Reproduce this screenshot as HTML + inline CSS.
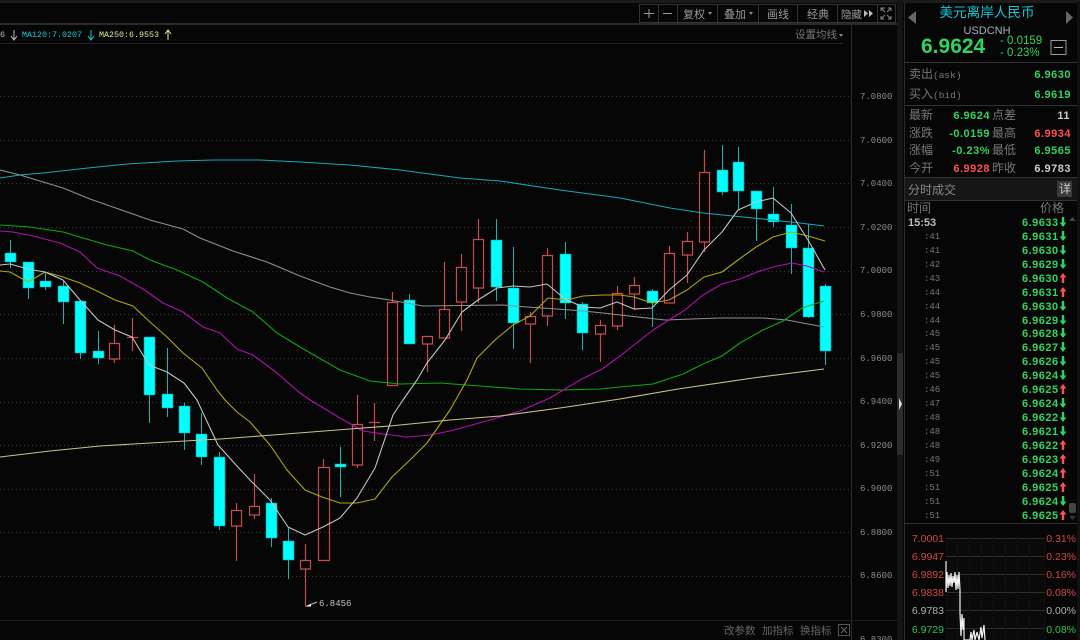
<!DOCTYPE html>
<html><head><meta charset="utf-8"><style>
html,body{margin:0;padding:0;background:#060606;width:1080px;height:640px;overflow:hidden}
svg{display:block}
.m{font-family:"Liberation Mono",monospace}
.c{font-family:"WenQuanYi Zen Hei","Noto Sans CJK SC",sans-serif}
.s{font-family:"Liberation Sans",sans-serif}
.b{font-family:"Liberation Sans",sans-serif;font-weight:bold;font-size:11px;letter-spacing:.5px}
</style></head><body>
<svg width="1080" height="640" viewBox="0 0 1080 640" xmlns="http://www.w3.org/2000/svg">
<defs>
<path id="d" d="M-1.2 -5H1.2V0.5H3.4L0 5L-3.4 0.5H-1.2Z" fill="#2fd35f"/>
<path id="u" d="M-1.2 5H1.2V-0.5H3.4L0 -5L-3.4 -0.5H-1.2Z" fill="#ff5050"/>
</defs>
<rect width="1080" height="640" fill="#060606"/>
<!-- frame -->
<rect x="0" y="0" width="1080" height="3" fill="#1b1b1b"/>
<rect x="0" y="23" width="897" height="2" fill="#2a2a2a"/>
<rect x="0" y="43" width="843" height="1" fill="#222"/>
<rect x="851" y="25" width="1" height="615" fill="#2a2a2a"/>
<rect x="0" y="620" width="897" height="1" fill="#1e1e1e"/>
<rect x="897" y="0" width="6" height="640" fill="#141414"/>
<rect x="897" y="353" width="6" height="102" fill="#2c2c2c"/>
<path d="M899 398L902 404L899 410Z" fill="#ddd"/>
<!-- toolbar -->
<g fill="none" stroke="#333"><rect x="639.5" y="4.5" width="256" height="18"/>
<path d="M658.5 4V22M677.5 4V22M717.5 4V22M758.5 4V22M797.5 4V22M837.5 4V22M877.5 4V22"/></g>
<path d="M644 13.5H654M649 9V18" stroke="#999" fill="none"/>
<path d="M663 13.5H672" stroke="#999" fill="none"/>
<g class="c" font-size="11" fill="#999">
<text x="683" y="18">复权</text><text x="724" y="18">叠加</text><text x="767" y="18">画线</text><text x="807" y="18">经典</text><text x="841" y="18" font-size="10.5">隐藏</text>
<text x="795" y="38" font-size="10.5" fill="#777">设置均线</text>
<text x="724" y="634" font-size="10.5" fill="#666">改参数</text><text x="762" y="634" font-size="10.5" fill="#666">加指标</text><text x="800" y="634" font-size="10.5" fill="#666">换指标</text>
</g>
<path d="M708 12H712L710 15ZM749 12H753L751 15ZM839 34H843L841 37Z" fill="#888"/>
<path d="M864 10L868 13.5L864 17ZM869 10L873 13.5L869 17Z" fill="#bbb"/>
<path d="M881 11V8H885M891 8H888M891 8V11M881 16V19H884M891 19V16M891 19H888M881 8L885 12M891 8L887 12M881 19L885 15M891 19L887 15" stroke="#888" fill="none"/>
<rect x="838.5" y="624.5" width="11" height="11" fill="none" stroke="#555"/>
<path d="M841 627L847 633M847 627L841 633" stroke="#666" fill="none"/>
<!-- MA text -->
<g class="m" font-size="8.5">
<text x="0" y="37" fill="#bbb">6</text>
<text x="22" y="37" fill="#19c8d8" textLength="60" lengthAdjust="spacingAndGlyphs">MA120:7.0207</text>
<text x="99" y="37" fill="#e6e69a" textLength="60" lengthAdjust="spacingAndGlyphs">MA250:6.9553</text>
</g>
<path d="M14 30V39M11 36L14 40L17 36" stroke="#bbb" fill="none"/>
<path d="M91 30V39M88 36L91 40L94 36" stroke="#19c8d8" fill="none"/>
<path d="M168 40V31M165 34L168 30L171 34" stroke="#e6e69a" fill="none"/>
<!-- grid -->
<path d="M0 96.5H851M0 140.5H851M0 183.5H851M0 227.5H851M0 271.5H851M0 314.5H851M0 358.5H851M0 402.5H851M0 445.5H851M0 489.5H851M0 532.5H851M0 576.5H851" stroke="#3a3a3a" stroke-dasharray="1 3" fill="none"/>
<g class="m" font-size="9" fill="#8a8a8a">
<text x="860" y="99">7.0800</text><text x="860" y="143">7.0600</text><text x="860" y="186">7.0400</text><text x="860" y="230">7.0200</text><text x="860" y="273">7.0000</text><text x="860" y="317">6.9800</text><text x="860" y="361">6.9600</text><text x="860" y="404">6.9400</text><text x="860" y="448">6.9200</text><text x="860" y="491">6.9000</text><text x="860" y="535">6.8800</text><text x="860" y="578">6.8600</text><text x="860" y="642">6.8300</text>
</g>
<!-- cyan wicks -->
<path fill="none" stroke="#12b4b4" d="M10.5 240V268M28.5 262V299M45.5 273V290M63.5 281V324M80.5 301V359M98.5 331V364M149.5 337V423M167.5 348V417M184.5 403V450M201.5 413V465M219.5 452V530M271.5 498V547M288.5 527V579M340.5 447V497M409.5 294V344M496.5 219V301M513.5 247V349M565.5 242V319M582.5 302V350M652.5 289V327M722.5 145V195M738.5 147V210M756.5 191V241M773.5 187V227M791.5 204V274M808.5 224V318M825.5 284V365"/>
<!-- cyan bodies -->
<path fill="#00ffff" stroke="#0c9a9a" stroke-width=".6" d="M5 253h11v9h-11zM23 262h11v26h-11zM40 281h11v6h-11zM58 286h11v16h-11zM75 301h11v52h-11zM93 351h11v7h-11zM144 337h11v58h-11zM162 394h11v14h-11zM179 406h11v27h-11zM196 434h11v23h-11zM214 457h11v69h-11zM266 503h11v35h-11zM283 541h11v19h-11zM335 464h11v3h-11zM404 300h11v44h-11zM491 240h11v47h-11zM508 288h11v35h-11zM560 254h11v49h-11zM577 304h11v29h-11zM647 291h11v12h-11zM717 170h11v22h-11zM733 162h11v29h-11zM751 191h11v18h-11zM768 214h11v8h-11zM786 225h11v23h-11zM803 248h11v69h-11zM820 286h11v65h-11z"/>
<!-- red -->
<path fill="none" stroke="#c94c4c" stroke-width="1.2" d="M114.5 325V343M114.5 359V363M109.5 343.5h10v15.5h-10zM132.5 318V351M127 337.5h11M236.5 503V510M236.5 526V561M231.5 510.5h10v15.5h-10zM254.5 474V506M254.5 515V519M249.5 506.5h10v8.5h-10zM305.5 544V560M305.5 569V606M300.5 560.5h10v8.5h-10zM323.5 459V467M318.5 467.5h11v93h-11zM357.5 395V424M357.5 465V468M352.5 424.5h10v40.5h-10zM374.5 403V441M369 422.5h11M392.5 292V302M387.5 302.5h10v83h-10zM427.5 344V372M422.5 336.5h10v7.5h-10zM444.5 262V309M439.5 309.5h10v28.5h-10zM461.5 254V267M461.5 302V331M456.5 267.5h10v34.5h-10zM478.5 219V239M478.5 288V303M473.5 239.5h10v48.5h-10zM530.5 312V316M530.5 324V363M525.5 316.5h10v7.5h-10zM547.5 248V255M547.5 316V326M542.5 255.5h10v60.5h-10zM600.5 320V325M600.5 334V362M595.5 325.5h10v8.5h-10zM617.5 286V293M617.5 326V330M612.5 293.5h10v32.5h-10zM634.5 277V285M634.5 294V310M629.5 285.5h10v8.5h-10zM669.5 246V253M664.5 253.5h10v49.5h-10zM687.5 232V241M687.5 255V283M682.5 241.5h10v13.5h-10zM704.5 150V172M704.5 242V252M699.5 172.5h10v69.5h-10z"/>
<!-- MA lines -->
<g fill="none" stroke-width="1.1" stroke-linejoin="round">
<polyline stroke="#14a9b8" points="0,178 20,175 43,173 88,168 127,164 177,161 213,160 260,160 300,162 350,165 400,170 460,178 500,181 560,190 620,198 670,208 703,213 753,218 800,223 824,226"/>
<polyline stroke="#8f8f8f" points="0,170 20,175 63,188 90,199 150,220 183,229 200,238 233,251 267,262 300,276 330,287 350,293 370,297 390,300 423,306 503,305 527,307 557,309 583,311 603,313 620,315 665,320 720,318 763,318 787,320 824,327"/>
<polyline stroke="#0ca80c" points="0,225 30,227 63,232 90,240 107,245 133,251 150,260 177,270 203,282 227,298 253,312 277,333 300,347 340,370 370,381 400,384 440,383 480,386 520,389 560,390 600,389 620,387 653,384 683,374 703,364 722,356 740,343 763,330 783,321 802,308 824,301"/>
<polyline stroke="#b010b0" points="0,231 13,232 33,236 60,243 80,252 97,268 120,276 143,289 163,303 183,312 203,327 220,333 237,349 253,355 277,373 300,393 310,400 340,418 363,431 383,434 407,437 430,435 450,431 490,420 520,411 550,398 580,380 602,369 620,356 653,330 685,310 703,295 722,284 740,279 757,272 773,267 792,263 807,266 824,272"/>
<polyline stroke="#b0a80a" points="0,271 10,272 28,282 45,272 63,277 80,283 97,291 115,300 133,306 150,322 167,337 183,353 202,368 217,390 225,400 237,412 250,422 270,445 287,470 305,490 322,497 340,503 357,503 375,499 392,477 410,460 427,443 450,410 467,380 477,358 495,340 513,325 530,316 548,298 567,300 583,296 603,295 620,295 634,297 652,303 669,300 687,290 704,277 722,272 738,260 756,247 773,237 791,232 808,236 825,241"/>
<polyline stroke="#c9c58a" points="0,457 50,451 100,446 150,443 220,439 260,436 350,429 390,426 450,420 500,416 560,408 620,399 678,389 753,378 824,369"/>
<polyline stroke="#c4c4c4" points="0,265 10,264 28,269 45,272 63,280 80,300 98,320 115,330 132,337 149,365 167,372 184,383 197,400 218,445 236,465 250,480 270,500 288,527 305,535 323,527 340,518 357,498 375,468 393,415 403,400 417,380 427,363 445,340 462,312 478,300 497,288 513,286 530,287 547,284 565,299 583,307 600,308 617,302 634,309 652,308 669,290 687,275 704,250 722,232 738,210 756,202 773,198 791,213 808,240 825,270"/>
</g>
<path d="M307 606L317 602" stroke="#bbb" fill="none"/><path d="M305 606.5L311 604L311 606.5Z" fill="#fff"/>
<text class="m" font-size="9" fill="#c4c4c4" x="319" y="606">6.8456</text>
<!-- right panel -->
<rect x="904" y="2" width="1" height="638" fill="#2a2a2a"/>
<rect x="1077" y="2" width="3" height="638" fill="#111"/>
<path d="M916 11V24L908 17.5Z" fill="#666"/>
<path d="M1066 11V24L1073 17.5Z" fill="#666"/>
<text class="c" font-size="13.6" fill="#12c6d6" x="987" y="17" text-anchor="middle">美元离岸人民币</text>
<text class="s" font-size="11" fill="#a8b0b8" x="987" y="34" text-anchor="middle">USDCNH</text>
<text class="s" font-size="21" font-weight="bold" fill="#2fd35f" x="921" y="53">6.9624</text>
<g class="s" font-size="11.5" fill="#2fd35f"><text x="1000" y="44">- 0.0159</text><text x="1000" y="56">- 0.23%</text></g>
<rect x="1051" y="40.5" width="15" height="14" fill="none" stroke="#999"/><path d="M1054 47.5H1063" stroke="#bbb"/>
<rect x="905" y="62" width="172" height="1" fill="#333"/>
<rect x="905" y="105" width="172" height="1" fill="#333"/>
<g class="c" font-size="12" fill="#777">
<text x="909" y="78">卖出<tspan class="m" font-size="9.5">(ask)</tspan></text><text x="909" y="98">买入<tspan class="m" font-size="9.5">(bid)</tspan></text>
<text x="909" y="119">最新</text><text x="909" y="137">涨跌</text><text x="909" y="154">涨幅</text><text x="909" y="172">今开</text>
<text x="992" y="119">点差</text><text x="992" y="137">最高</text><text x="992" y="154">最低</text><text x="992" y="172">昨收</text>
</g>
<g class="b" text-anchor="end" fill="#2fd35f">
<text x="1071" y="78">6.9630</text><text x="1071" y="98">6.9619</text>
<text x="990" y="119">6.9624</text><text x="990" y="137">-0.0159</text><text x="990" y="154">-0.23%</text><text x="990" y="172" fill="#ff5050">6.9928</text>
<text x="1070" y="119" fill="#ccc">11</text><text x="1071" y="137" fill="#ff5050">6.9934</text><text x="1071" y="154">6.9565</text><text x="1071" y="172" fill="#ccc">6.9783</text>
</g>
<rect x="905" y="178" width="172" height="22" fill="#161616"/>
<rect x="905" y="177" width="172" height="1" fill="#333"/>
<rect x="905" y="200" width="172" height="1" fill="#333"/>
<text class="c" font-size="12" fill="#888" x="908" y="194">分时成交</text>
<rect x="1057" y="181" width="15" height="16" fill="#3a3a3a"/>
<text class="c" font-size="12" fill="#ccc" x="1059" y="193">详</text>
<g class="c" font-size="12" fill="#777"><text x="907" y="212">时间</text><text x="1040" y="212">价格</text></g>
<text class="s" font-size="11" font-weight="bold" fill="#bbb" x="908" y="226">15:53</text>
<g class="m" font-size="9" fill="#777">
<text x="924" y="239">:41</text><text x="924" y="253">:41</text><text x="924" y="267">:42</text><text x="924" y="281">:43</text><text x="924" y="295">:44</text><text x="924" y="309">:44</text><text x="924" y="323">:44</text><text x="924" y="336">:45</text><text x="924" y="350">:45</text><text x="924" y="364">:45</text><text x="924" y="378">:45</text><text x="924" y="392">:46</text><text x="924" y="406">:47</text><text x="924" y="420">:48</text><text x="924" y="434">:48</text><text x="924" y="448">:48</text><text x="924" y="462">:49</text><text x="924" y="476">:51</text><text x="924" y="490">:51</text><text x="924" y="504">:51</text><text x="924" y="518">:51</text>
</g>
<g class="b" fill="#2fd35f">
<text x="1022" y="226">6.9633</text><text x="1022" y="240">6.9631</text><text x="1022" y="254">6.9630</text><text x="1022" y="268">6.9629</text><text x="1022" y="282">6.9630</text><text x="1022" y="296">6.9631</text><text x="1022" y="310">6.9630</text><text x="1022" y="324">6.9629</text><text x="1022" y="337">6.9628</text><text x="1022" y="351">6.9627</text><text x="1022" y="365">6.9626</text><text x="1022" y="379">6.9624</text><text x="1022" y="393">6.9625</text><text x="1022" y="407">6.9624</text><text x="1022" y="421">6.9622</text><text x="1022" y="435">6.9621</text><text x="1022" y="449">6.9622</text><text x="1022" y="463">6.9623</text><text x="1022" y="477">6.9624</text><text x="1022" y="491">6.9625</text><text x="1022" y="505">6.9624</text><text x="1022" y="519">6.9625</text>
</g>
<use href="#d" x="1063" y="222"/><use href="#d" x="1063" y="236"/><use href="#d" x="1063" y="250"/><use href="#d" x="1063" y="264"/><use href="#u" x="1063" y="278"/><use href="#u" x="1063" y="292"/><use href="#d" x="1063" y="306"/><use href="#d" x="1063" y="320"/><use href="#d" x="1063" y="333"/><use href="#d" x="1063" y="347"/><use href="#d" x="1063" y="361"/><use href="#d" x="1063" y="375"/><use href="#u" x="1063" y="389"/><use href="#d" x="1063" y="403"/><use href="#d" x="1063" y="417"/><use href="#d" x="1063" y="431"/><use href="#u" x="1063" y="445"/><use href="#u" x="1063" y="459"/><use href="#u" x="1063" y="473"/><use href="#u" x="1063" y="487"/><use href="#d" x="1063" y="501"/><use href="#u" x="1063" y="515"/>
<path d="M1069 221L1072.5 217L1076 221Z" fill="#444"/>
<rect x="1069" y="503" width="7" height="10" rx="2" fill="#444"/>
<path d="M1069 516L1072.5 520L1076 516Z" fill="#333"/>
<rect x="905" y="523" width="172" height="1" fill="#333"/>
<!-- mini chart -->
<rect x="946" y="538" width="99" height="102" fill="#0a0a0a"/>
<path d="M946 538.5H1045M946 556.5H1045M946 574.5H1045M946 592.5H1045M946 610.5H1045M946 628.5H1045" stroke="#2e2e2e" fill="none"/>
<path d="M946 538V640M1045 538V640M957.5 538V640M969.5 538V640M981.5 538V640M993.5 538V640M1005.5 538V640M1017.5 538V640M1029.5 538V640" stroke="#1e1e1e" stroke-dasharray="1 2" fill="none"/>
<polyline fill="none" stroke="#f2f2f2" stroke-width="1.2" points="946,561 946,592 947,572 948,588 949,575 950,586 951,573 952,587 953,576 954,583 955,572 956,590 957,575 958,589 959,572 960,590 960,613 961,636 962,614 963,630 964,618 964,640 970,640 971,632 972,640 974,630 975,640 977,632 979,640 981,627 982,638 984,625 985,640"/>
<g class="s" font-size="10.5" text-anchor="end">
<g fill="#d04848"><text x="944" y="542">7.0001</text><text x="944" y="560">6.9947</text><text x="944" y="578">6.9892</text><text x="944" y="596">6.9838</text>
<text x="1076" y="542">0.31%</text><text x="1076" y="560">0.23%</text><text x="1076" y="578">0.16%</text><text x="1076" y="596">0.08%</text></g>
<g fill="#b0b0b0"><text x="944" y="614">6.9783</text><text x="1076" y="614">0.00%</text></g>
<g fill="#2fc45a"><text x="944" y="633">6.9729</text><text x="1076" y="633">0.08%</text></g>
</g>
</svg>
</body></html>
